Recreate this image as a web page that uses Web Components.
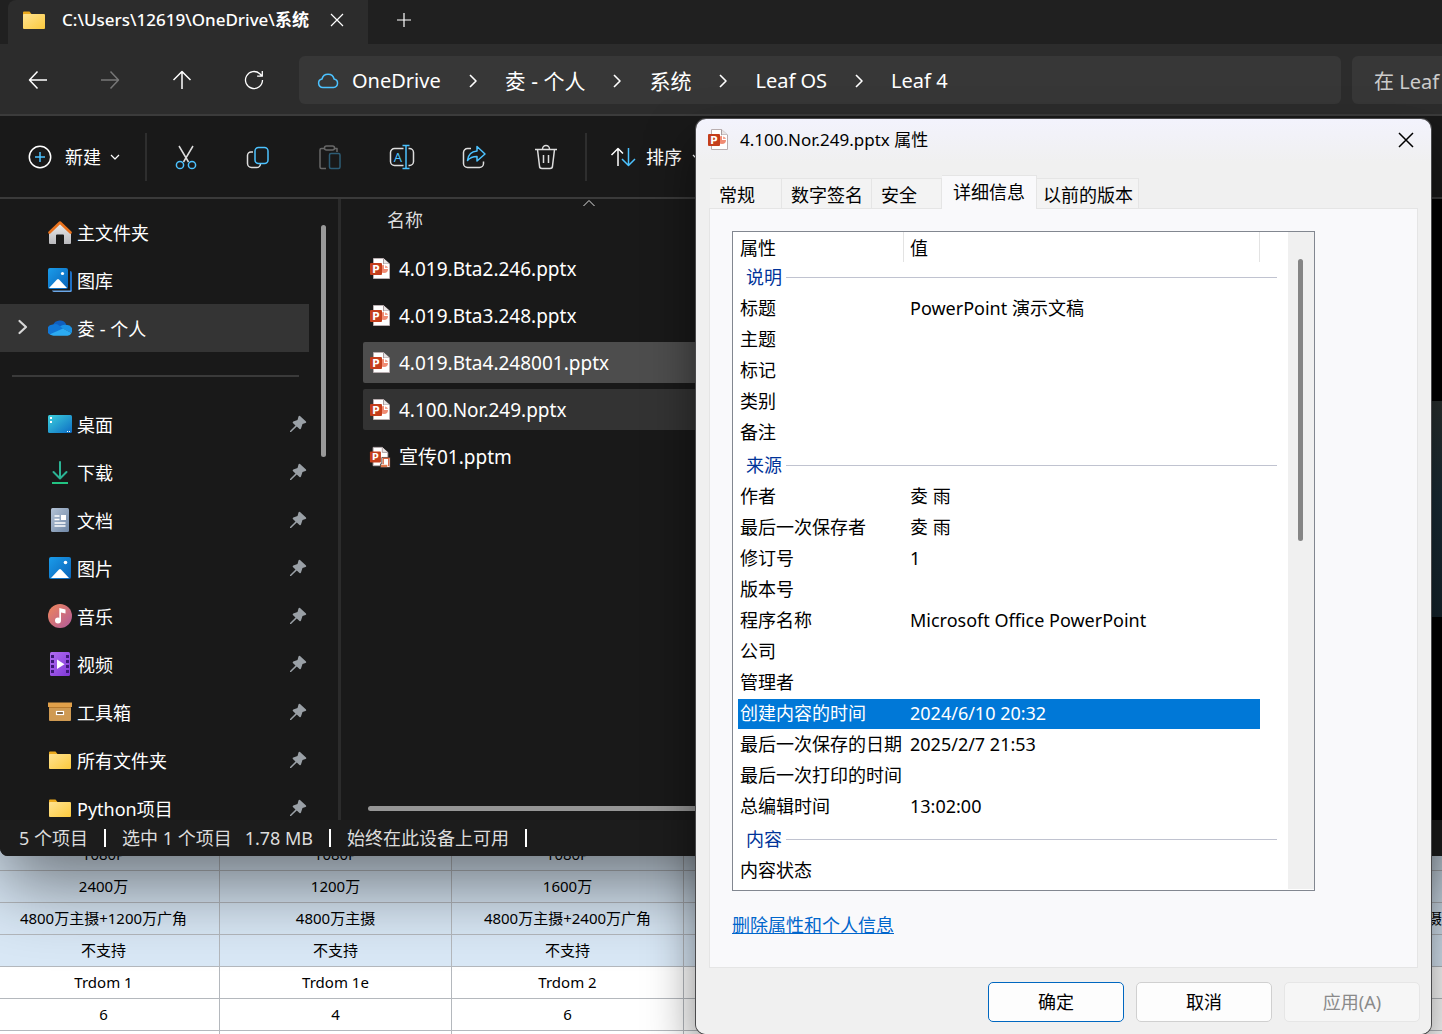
<!DOCTYPE html>
<html lang="zh-CN">
<head>
<meta charset="utf-8">
<title>4.100.Nor.249.pptx 属性</title>
<style>
    body {
        margin: 0;
        height: 100vh;
        overflow: hidden;
        position: relative;
        background: #fff;
        font-family: "Noto Sans", "Noto Sans CJK SC", sans-serif;
        font-size: 18px;
        line-height: 26px;
    }
    /* windows on the desktop */
    sheet-view {
        position: absolute;
        top: 839px;
        left: 0;
        right: 0;
    }
    explorer-window {
        position: absolute;
        top: 0;
        left: 0;
        right: 0;
        height: 856px;
    }
    properties-dialog {
        position: absolute;
        top: 119px;
        right: 11px;
        width: 735px;
    }
</style>
</head>
<body>
<sheet-view></sheet-view>

<explorer-window>
    <span slot="tab">C:\Users\12619\OneDrive\<b>系统</b></span>

    <side-item slot="side" icon="home">主文件夹</side-item>
    <side-item slot="side" icon="gallery">图库</side-item>
    <side-item slot="side" icon="onedrive" selected>夌 - 个人</side-item>
    <side-line slot="side"></side-line>
    <side-item slot="side" icon="desktop" pinned>桌面</side-item>
    <side-item slot="side" icon="download" pinned>下载</side-item>
    <side-item slot="side" icon="document" pinned>文档</side-item>
    <side-item slot="side" icon="picture" pinned>图片</side-item>
    <side-item slot="side" icon="music" pinned>音乐</side-item>
    <side-item slot="side" icon="video" pinned>视频</side-item>
    <side-item slot="side" icon="box" pinned>工具箱</side-item>
    <side-item slot="side" icon="folder" pinned>所有文件夹</side-item>
    <side-item slot="side" icon="folder" pinned>Python项目</side-item>

    <file-row slot="files" icon="pptx">4.019.Bta2.246.pptx</file-row>
    <file-row slot="files" icon="pptx">4.019.Bta3.248.pptx</file-row>
    <file-row slot="files" icon="pptx" state="active">4.019.Bta4.248001.pptx</file-row>
    <file-row slot="files" icon="pptx" state="hover">4.100.Nor.249.pptx</file-row>
    <file-row slot="files" icon="pptm">宣传01.pptm</file-row>
</explorer-window>

<properties-dialog>
    <span slot="title">4.100.Nor.249.pptx 属性</span>
</properties-dialog>

<script>
const ICONS = {
    folder: [24, 24, `
        <defs><linearGradient id="f" x1="0" y1="0" x2="1" y2="1"><stop offset="0" stop-color="#ffe391"/><stop offset="1" stop-color="#fbc93d"/></linearGradient></defs>
        <path fill="#eba91c" d="M1 4.500a1 1 0 0 1 1-1h5.500l2 2.500H22v5H1z"/>
        <rect x="1" y="6" width="22" height="15" rx="1" fill="url(#f)"/>`],
    home: [24, 24, `
        <defs><linearGradient id="h" x1="0" y1="0" x2="0" y2="1"><stop offset="0" stop-color="#eee"/><stop offset="1" stop-color="#b9b9bd"/></linearGradient></defs>
        <path fill="url(#h)" d="M1 12 12 2l11 10v11a1 1 0 0 1-1 1h-6v-8.500a1 1 0 0 0-1-1H9a1 1 0 0 0-1 1V24H2a1 1 0 0 1-1-1z"/>
        <path fill="none" stroke="#e8711c" stroke-width="2.600" stroke-linecap="round" stroke-linejoin="round" d="M1.500 12.500 12 2.500l10.500 10"/>`],
    gallery: [24, 24, `
        <defs><linearGradient id="g" x1="0" y1="0" x2="1" y2="1"><stop offset="0" stop-color="#1a9cea"/><stop offset="1" stop-color="#0a63b8"/></linearGradient></defs>
        <path fill="#1f6fc4" d="M22 3a2 2 0 0 1 2 2v17a2 2 0 0 1-2 2V3z"/>
        <path fill="#6ba7e8" d="M4 22.500h20a2 2 0 0 1-2 1.500H6a2 2 0 0 1-2-1.500z"/>
        <rect width="20" height="21" rx="2" fill="url(#g)"/>
        <path fill="#fff" d="M1 20l8-8.500a1.500 1.500 0 0 1 2 0L19 20z"/>
        <circle cx="14.500" cy="5.500" r="1.600" fill="#fff"/>`],
    picture: [24, 24, `
        <defs><linearGradient id="p" x1="0" y1="0" x2="1" y2="1"><stop offset="0" stop-color="#1a9cea"/><stop offset="1" stop-color="#0a63b8"/></linearGradient></defs>
        <rect x="1" y="1" width="22" height="22" rx="2" fill="url(#p)"/>
        <path fill="#fff" d="M3 22l8-8.500a1.500 1.500 0 0 1 2 0L21 22z"/>
        <circle cx="17.500" cy="6.500" r="1.800" fill="#fff"/>`],
    onedrive: [24, 24, `
        <path fill="#0f5fc0" d="M5 9.500A7.200 7.200 0 0 1 18.500 9L10 15z"/>
        <path fill="#1177d6" d="M5 8.500a6 6 0 0 1 6 1l5 3.500-13.500 6A5.500 5.500 0 0 1 5 8.500z"/>
        <path fill="#1a92e6" d="M18 9a5.300 5.300 0 0 1 5.500 8l-8-4-3.500-2.500A7 7 0 0 1 18 9z"/>
        <path fill="#2cabf2" d="M2 18.200 15 12.500l8.500 4.500a5 5 0 0 1-4 2.700h-14a6 6 0 0 1-3.500-1.500z"/>`],
    desktop: [24, 24, `
        <defs><linearGradient id="d" x1="0" y1="0" x2="1" y2="1"><stop offset="0" stop-color="#3dd0dc"/><stop offset="1" stop-color="#0d6cc4"/></linearGradient></defs>
        <rect y="3" width="24" height="18" rx="1.500" fill="url(#d)"/>
        <path fill="#fff" d="M2 5h2v2H2zM2 9h2v2H2zM19 19h1v1h-1zM21 19h1v1h-1z"/>`],
    download: [24, 24, `
        <path fill="none" stroke="#2bb394" stroke-width="2" stroke-linecap="round" stroke-linejoin="round" d="M12 2v16M5.500 12l6.500 6.500L18.500 12"/>
        <path fill="none" stroke="#22c382" stroke-width="2" d="M4 23h16"/>`],
    document: [24, 24, `
        <defs><linearGradient id="c" x1="0" y1="0" x2="1" y2="1"><stop offset="0" stop-color="#b4c3d6"/><stop offset="1" stop-color="#6f87a6"/></linearGradient></defs>
        <rect x="3" y="0" width="18" height="24" rx="1.500" fill="url(#c)"/>
        <path stroke="#fff" stroke-width="1.500" d="M6.500 8h5M6.500 11.500h5M6.500 15h11M6.500 18h11"/>
        <path fill="#fff" d="M13 7h5v5h-5z"/>`],
    music: [24, 24, `
        <defs><linearGradient id="m" x1="0" y1="0" x2="1" y2="1"><stop offset="0" stop-color="#f0875a"/><stop offset="1" stop-color="#b05a9c"/></linearGradient></defs>
        <circle cx="12" cy="12" r="12" fill="url(#m)"/>
        <circle cx="10" cy="16.500" r="3" fill="#fff"/>
        <path fill="#fff" d="M11.300 4 17.500 5.500V9.500l-4.500-1v8h-1.700z"/>`],
    video: [24, 24, `
        <defs><linearGradient id="v" x1="0" y1="0" x2="1" y2="1"><stop offset="0" stop-color="#b16cf2"/><stop offset="1" stop-color="#8038d6"/></linearGradient></defs>
        <rect x="2" y="0" width="20" height="24" rx="1.500" fill="url(#v)"/>
        <path stroke="#3d1778" stroke-width="3" stroke-dasharray="3 2" d="M4.500 3v19M19.500 3v19"/>
        <path fill="#fff" d="M9 7.500v9.500l7.500-4.700z"/>`],
    box: [24, 24, `
        <rect x="1" y="7" width="22" height="14" rx="1" fill="#cf9a52"/>
        <path fill="#e0a04a" d="M0 2.500h24V7H0z"/>
        <path fill="#b67a2e" d="M1 7h22v1H1z"/>
        <rect x="8.500" y="11.500" width="7" height="3" fill="#7a5a30" stroke="#fff" stroke-width="1.200"/>`],
    pin: [18, 18, `
        <path fill="#9aa0a6" d="M11 1l6 5.500a1 1 0 0 1-.5 1.500l-3 1-1.500 4.500a1 1 0 0 1-1.500.4L7.800 11.500 2 17H1v-1l5.500-5.500-2.600-2.600A1 1 0 0 1 4.300 6.400L8.500 5l1-3.500A1 1 0 0 1 11 1z"/>`],
    pptx: [22, 24, `
        <path fill="#fff" stroke="#b9aeb0" d="M4.500 1.500h10l6 5.500v14.500h-16z"/>
        <path fill="#e9e4e4" stroke="#a89c9e" d="M14.500 1.500V7h6"/>
        <circle cx="15" cy="12" r="4" fill="#f08c74"/><path fill="#fff" d="M15 7h5v5h-5z"/><path fill="#f3a592" d="M16 8.500a3 3 0 0 1 3 2.500h-3z"/>
        <rect x="1" y="6" width="12" height="12" rx="1" fill="#c43e1c"/>
        <text x="7" y="15.500" font-family="DejaVu Sans" font-size="10" font-weight="700" fill="#fff" text-anchor="middle">P</text>`],
    pptm: [24, 24, `
        <path fill="#fff" stroke="#b9aeb0" d="M4.500 1.500h10l6 5.500v14.500h-16z"/>
        <path fill="#e9e4e4" stroke="#a89c9e" d="M14.500 1.500V7h6"/>
        <rect x="1" y="6" width="12" height="12" rx="1" fill="#c43e1c"/>
        <text x="7" y="15.500" font-family="DejaVu Sans" font-size="10" font-weight="700" fill="#fff" text-anchor="middle">P</text>
        <path fill="#fff" stroke="#2a1a16" stroke-width=".8" d="M14 12.500h9V23.500H12.500v-4H14z"/>
        <path fill="none" stroke="#d9653f" stroke-width="1.400" d="M15.500 20v-6.500H22.500M21.500 14v8"/>
        <path fill="#e07a4e" d="M13 20.500h7V23h-7z"/>`],
    cloud: [24, 24, `<path class="a" d="M7 18.500h10.500a4.300 4.300 0 0 0 .6-8.500 6.200 6.200 0 0 0-12.100 0A4.300 4.300 0 0 0 7 18.500z"/>`],
    back: [24, 24, `<path d="M21 12H3.500M11.500 3.500 3.500 12l8 8.500"/>`],
    forward: [24, 24, `<path d="M3 12h17.500M12.500 3.500l8 8.500-8 8.500"/>`],
    up: [24, 24, `<path d="M12 21V3.500M3.500 12 12 3.500l8.500 8.500"/>`],
    refresh: [24, 24, `<path stroke-width="1.300" d="M20.500 12A8.500 8.500 0 1 1 17.800 5.800L20 8M20.300 3v5.200h-5.200"/>`],
    chevron: [10, 18, `<path stroke-width="1.600" d="M2 4l6 6-6 6"/>`],
    expand: [12, 16, `<path stroke-width="2.200" stroke-linecap="round" d="M2.500 2 9 8l-6.500 6"/>`],
    down: [10, 10, `<path stroke-width="1.200" d="M1 3l4 4 4-4"/>`],
    caret: [14, 8, `<path stroke-width="1" d="M1.500 7 7 1.500 12.500 7"/>`],
    close: [18, 18, `<path stroke-width="1.500" d="M2 2l14 14M16 2 2 16"/>`],
    closetab: [14, 14, `<path stroke-width="1.200" d="M1 1l12 12M13 1 1 13"/>`],
    plus: [16, 16, `<path stroke-width="1.200" d="M8 1v14M1 8h14"/>`],
    create: [24, 24, `<circle cx="12" cy="12" r="10.700"/><path class="a" d="M12 7v10M7 12h10"/>`],
    cut: [26, 26, `
        <path d="M6 2l9.500 16M20 2l-9.500 16"/>
        <circle class="a" cx="7" cy="21" r="3.600"/><circle class="a" cx="19" cy="21" r="3.600"/>`],
    copy: [26, 26, `
        <path d="M8 8H6a3.500 3.500 0 0 0-3.500 3.500v8A4 4 0 0 0 6.500 23.500h5a4 4 0 0 0 4-3.500"/>
        <rect class="a" x="10" y="3.500" width="13" height="16" rx="3.500"/>`],
    paste: [26, 26, `
        <path d="M8 4.500H4.500A1.500 1.500 0 0 0 3 6v17A1.500 1.500 0 0 0 4.500 24.500H9M18 4.500h2V8"/>
        <rect x="7.500" y="2" width="10" height="4" rx="2"/>
        <rect class="a" x="12.500" y="9.500" width="10.500" height="15" rx="1.500"/>`],
    rename: [26, 26, `
        <path d="M14.500 4.500h-9a4 4 0 0 0-4 4v9a4 4 0 0 0 4 4h9M19.500 4.500h1a4 4 0 0 1 4 4v9a4 4 0 0 1-4 4h-1"/>
        <path class="a" d="M17 2v22M13.500 1.500h7M13.500 24.500h7"/>
        <text class="t" x="9" y="17.500" font-size="13" text-anchor="middle">A</text>`],
    share: [26, 26, `
        <path d="M10 4.500H6.500a4 4 0 0 0-4 4v11a4 4 0 0 0 4 4h12a4 4 0 0 0 4-4v-2"/>
        <path class="a" d="M16 2.500 24 10l-8 7v-4.500c-4 0-7 1-9.500 4 .5-5 3.500-9 9.500-9.500z"/>`],
    trash: [26, 26, `
        <path d="M2 5.500h22M4.500 5.500l2 16.500a2.500 2.500 0 0 0 2.500 2.500h8a2.500 2.500 0 0 0 2.500-2.500l2-16.500M9.500 5a3.500 3.500 0 0 1 7 0M10.500 11v8M15.500 11v8"/>`],
    sort: [26, 26, `
        <path d="M8 22V4.500M1.500 11 8 4.500l5 5"/>
        <path class="a" d="M18.500 4v17.500M12 15l6.500 6.500L25 15"/>`],
};

class WinIcon extends HTMLElement {
    constructor(){
        super();
        this.attachShadow({ mode: 'open' });
    }

    connectedCallback(){
        const [w, h, shape] = ICONS[this.getAttribute('name')];
        this.shadowRoot.innerHTML = `
            <style>
                :host {
                    display: inline-flex;
                    flex: none;
                }
                svg {
                    display: block;
                }
                .a {
                    stroke: #4cc2ff;
                }
                .t {
                    fill: #4cc2ff;
                    stroke: none;
                }
            </style>
            <svg width="${w}" height="${h}" viewBox="0 0 ${w} ${h}" aria-hidden="true"></svg>
        `;
        const svg = this.shadowRoot.querySelector('svg');
        // line icons inherit the text colour, filled ones bring their own
        if(!shape.includes('fill="')){
            svg.setAttribute('fill', 'none');
            svg.setAttribute('stroke', 'currentColor');
            svg.setAttribute('stroke-width', '1.500');
            svg.setAttribute('stroke-linejoin', 'round');
        }
        svg.innerHTML = shape;
    }
}
customElements.define('win-icon', WinIcon);

class SideItem extends HTMLElement {
    constructor(){
        super();
        this.attachShadow({ mode: 'open' });
    }

    connectedCallback(){
        const selected = this.hasAttribute('selected');
        const pinned = this.hasAttribute('pinned');
        this.shadowRoot.innerHTML = `
            <style>
                :host {
                    display: block;
                }
                :host([selected]) {
                    background: #343434;
                }
                a {
                    display: grid;
                    grid-template-columns: 34px 24px 1fr 20px;
                    align-items: center;
                    height: 48px;
                    padding-left: 14px;
                    color: #fff;
                    text-decoration: none;
                }
                .label {
                    padding: 2px 0 0 5px;
                    white-space: nowrap;
                }
                .arrow {
                    padding-left: 3px;
                    color: #d8d8d8;
                }
            </style>
            <a href="#">
                <span class="arrow">${selected ? '<win-icon name="expand"></win-icon>' : ''}</span>
                <win-icon name="${this.getAttribute('icon')}"></win-icon>
                <span class="label"><slot></slot></span>
                ${pinned ? '<win-icon name="pin"></win-icon>' : ''}
            </a>
        `;
    }
}
customElements.define('side-item', SideItem);

class SideLine extends HTMLElement {
    constructor(){
        super();
        this.attachShadow({ mode: 'open' });
        this.shadowRoot.innerHTML = `
            <style>
                :host {
                    display: flex;
                    align-items: center;
                    height: 48px;
                    padding: 0 10px 0 12px;
                }
                hr {
                    flex: 1;
                    margin: 0;
                    border: 0;
                    height: 2px;
                    background: #3a3a3a;
                }
            </style>
            <hr>
        `;
    }
}
customElements.define('side-line', SideLine);

class FileRow extends HTMLElement {
    constructor(){
        super();
        this.attachShadow({ mode: 'open' });
    }

    connectedCallback(){
        this.shadowRoot.innerHTML = `
            <style>
                :host {
                    display: block;
                    font-size: 19px;
                }
                button {
                    display: grid;
                    grid-template-columns: 22px 1fr;
                    align-items: center;
                    gap: 8px;
                    width: 100%;
                    height: 41px;
                    padding: 0 6px;
                    border: 0;
                    border-radius: 2px;
                    background: none;
                    font: inherit;
                    color: #fff;
                    text-align: left;
                }
                :host([state="active"]) button {
                    background: #4d4d4d;
                }
                :host([state="hover"]) button {
                    background: #333;
                }
            </style>
            <button type="button">
                <win-icon name="${this.getAttribute('icon')}"></win-icon>
                <span><slot></slot></span>
            </button>
        `;
    }
}
customElements.define('file-row', FileRow);

class ExplorerWindow extends HTMLElement {
    constructor(){
        super();
        this.attachShadow({ mode: 'open' });
        const crumbs = [['夌 - 个人', 'cjk'], ['系统', 'cjk'], ['Leaf OS', ''], ['Leaf 4', '']];
        const tools = [['cut', '剪切'], ['copy', '复制'], ['paste', '粘贴'], ['rename', '重命名'], ['share', '共享'], ['trash', '删除']];
        this.shadowRoot.innerHTML = `
            <style>
                :host {
                    display: flex;
                    flex-direction: column;
                    overflow: hidden;
                    border-bottom-left-radius: 8px;
                    background: #191919;
                    color: #fff;
                    box-shadow: 0 28px 72px rgba(0, 0, 0, .5);
                }
                button {
                    display: flex;
                    align-items: center;
                    justify-content: center;
                    flex: none;
                    padding: 0;
                    border: 0;
                    background: none;
                    color: inherit;
                    font: inherit;
                }
                header {
                    display: flex;
                    height: 44px;
                    padding-left: 8px;
                    background: #202020;
                }
                .tab {
                    display: flex;
                    align-items: center;
                    box-sizing: border-box;
                    width: 360px;
                    padding: 0 22px 4px 14px;
                    gap: 16px;
                    background: #2c2c2c;
                    font-size: 17px;
                    font-weight: 500;
                    white-space: nowrap;
                    border-radius: 8px 0 0 0;
                }
                .tab button {
                    margin-left: auto;
                    width: 18px;
                }
                header > button {
                    width: 72px;
                    padding-bottom: 4px;
                }
                .nav {
                    display: flex;
                    align-items: center;
                    height: 68px;
                    padding: 2px 0 0 2px;
                    background: #2c2c2c;
                    border-bottom: 2px solid #3b3b3b;
                    font-size: 20px;
                }
                .nav > button {
                    width: 72px;
                    height: 48px;
                }
                .nav > button[disabled] {
                    color: #777;
                }
                .address {
                    display: flex;
                    align-items: center;
                    flex: 1;
                    gap: 27px;
                    height: 48px;
                    margin: 0 11px 0 9px;
                    padding-left: 17px;
                    border-radius: 6px;
                    background: #373737;
                    white-space: nowrap;
                }
                .address a {
                    display: flex;
                    align-items: center;
                    gap: 12px;
                    padding-top: 2px;
                    color: inherit;
                    text-decoration: none;
                }
                .address .cjk {
                    font-size: 21px;
                }
                input {
                    box-sizing: border-box;
                    width: 90px;
                    height: 48px;
                    padding: 2px 0 0 22px;
                    border: 0;
                    border-radius: 6px 0 0 6px;
                    background: #373737;
                    color: #ccc;
                    font: inherit;
                }
                input::placeholder {
                    color: #ccc;
                }
                .tools {
                    display: flex;
                    align-items: center;
                    height: 81px;
                    border-bottom: 2px solid #3a3a3a;
                }
                .tools button {
                    width: 72px;
                    height: 48px;
                    color: #ddd;
                }
                .tools button[disabled] win-icon {
                    opacity: .4;
                }
                .tools .wide {
                    width: auto;
                    gap: 10px;
                    padding: 0 20px;
                    color: #fff;
                }
                .tools .first {
                    gap: 13px;
                    padding: 0 22px 0 28px;
                }
                .tools .first win-icon:last-child {
                    margin-left: -4px;
                }
                .split {
                    width: 2px;
                    height: 48px;
                    margin: 0 3px;
                    background: #2e2e2e;
                }
                main {
                    display: flex;
                    flex: 1;
                    min-height: 0;
                }
                nav {
                    display: flex;
                    width: 338px;
                    flex: none;
                    overflow: hidden;
                    border-right: 3px solid #2b2b2b;
                }
                .side {
                    width: 309px;
                    padding-top: 9px;
                }
                .thumb {
                    width: 5px;
                    height: 232px;
                    margin: 26px 0 0 12px;
                    border-radius: 3px;
                    background: #999;
                }
                .files {
                    display: flex;
                    flex-direction: column;
                    flex: 1;
                    min-width: 0;
                    padding-left: 22px;
                }
                .column {
                    display: flex;
                    flex-direction: column;
                    width: 452px;
                    height: 49px;
                    color: #ddd;
                }
                .column win-icon {
                    align-self: center;
                }
                .column span {
                    padding-left: 24px;
                }
                .rows {
                    display: grid;
                    gap: 6px;
                }
                .bar {
                    height: 5px;
                    margin: auto 0 9px 5px;
                    border-radius: 3px;
                    background: #959595;
                }
                aside {
                    display: flex;
                    flex-direction: column;
                    width: 40px;
                    background: #000;
                }
                aside div {
                    height: 216px;
                    margin-top: 202px;
                    background: linear-gradient(#2a302f, #1a2c36 45%, #15242c);
                }
                footer {
                    display: flex;
                    align-items: center;
                    gap: 16px;
                    height: 36px;
                    padding-left: 19px;
                    background: #1c1c1c;
                    color: #ddd;
                }
                footer div {
                    display: flex;
                    gap: 13px;
                }
                footer i {
                    width: 2px;
                    height: 18px;
                    background: #fff;
                }
            </style>
            <header>
                <div class="tab">
                    <win-icon name="folder"></win-icon>
                    <slot name="tab"></slot>
                    <button type="button" aria-label="关闭标签页"><win-icon name="closetab"></win-icon></button>
                </div>
                <button type="button" aria-label="新标签页"><win-icon name="plus"></win-icon></button>
            </header>
            <div class="nav">
                <button type="button" aria-label="后退"><win-icon name="back"></win-icon></button>
                <button type="button" aria-label="前进" disabled><win-icon name="forward"></win-icon></button>
                <button type="button" aria-label="上移"><win-icon name="up"></win-icon></button>
                <button type="button" aria-label="刷新"><win-icon name="refresh"></win-icon></button>
                <div class="address">
                    <a href="#"><win-icon name="cloud"></win-icon>OneDrive</a>
                    ${crumbs.map(([name, cls]) => `<win-icon name="chevron"></win-icon><a href="#" class="${cls}">${name}</a>`).join('')}
                </div>
                <input type="text" aria-label="搜索" placeholder="在 Leaf">
            </div>
            <div class="tools">
                <button type="button" class="wide first"><win-icon name="create"></win-icon>新建<win-icon name="down"></win-icon></button>
                <div class="split"></div>
                ${tools.map(([icon, label]) => `<button type="button" aria-label="${label}" ${icon === 'paste' ? 'disabled' : ''}><win-icon name="${icon}"></win-icon></button>`).join('')}
                <div class="split"></div>
                <button type="button" class="wide"><win-icon name="sort"></win-icon>排序<win-icon name="down"></win-icon></button>
            </div>
            <main>
                <nav>
                    <div class="side"><slot name="side"></slot></div>
                    <div class="thumb"></div>
                </nav>
                <div class="files">
                    <div class="column"><win-icon name="caret"></win-icon><span>名称</span></div>
                    <div class="rows"><slot name="files"></slot></div>
                    <div class="bar"></div>
                </div>
                <aside><div></div></aside>
            </main>
            <footer>
                <span>5 个项目</span><i></i>
                <div><span>选中 1 个项目</span><span>1.78 MB</span></div><i></i>
                <span>始终在此设备上可用</span><i></i>
            </footer>
        `;
    }
}
customElements.define('explorer-window', ExplorerWindow);

class PropertyTable extends HTMLElement {
    constructor(){
        super();
        this.attachShadow({ mode: 'open' });
        const groups = [
            ['说明', [['标题', 'PowerPoint 演示文稿'], ['主题', ''], ['标记', ''], ['类别', ''], ['备注', '']]],
            ['来源', [['作者', '夌 雨'], ['最后一次保存者', '夌 雨'], ['修订号', '1'], ['版本号', ''],
                ['程序名称', 'Microsoft Office PowerPoint'], ['公司', ''], ['管理者', ''],
                ['创建内容的时间', '2024/6/10 20:32'], ['最后一次保存的日期', '2025/2/7 21:53'],
                ['最后一次打印的时间', ''], ['总编辑时间', '13:02:00']]],
            ['内容', [['内容状态', '']]],
        ];
        const row = ([name, value]) => `
            <tr class="${name === '创建内容的时间' ? 'selected' : ''}"><th scope="row">${name}</th><td>${value}</td><td></td></tr>`;
        const group = ([name, rows]) => `
            <tbody><tr class="group"><th colspan="3"><div>${name}<i></i></div></th></tr>${rows.map(row).join('')}</tbody>`;
        this.shadowRoot.innerHTML = `
            <style>
                :host {
                    display: flex;
                    padding: 0 0 3px 5px;
                    gap: 11px;
                    border: 1px solid #828790;
                    background: #fff;
                }
                table {
                    flex: 1;
                    table-layout: fixed;
                    border-collapse: separate;
                    border-spacing: 0;
                }
                col.name {
                    width: 166px;
                }
                col.end {
                    width: 17px;
                }
                th, td {
                    height: 28px;
                    padding: 0 0 2px 2px;
                    border-bottom: 1px solid transparent;
                    background-clip: padding-box;
                    text-align: left;
                    font-weight: 400;
                    white-space: nowrap;
                }
                td, thead th + th {
                    padding-left: 6px;
                }
                thead th {
                    padding-top: 2px;
                    padding-bottom: 0;
                    box-shadow: inset -1px 0 #e3e3e3;
                }
                .group th {
                    padding-left: 8px;
                    color: #039;
                }
                tbody + tbody .group th {
                    padding-top: 2px;
                }
                .group div {
                    display: flex;
                    align-items: center;
                    gap: 4px;
                }
                i {
                    flex: 1;
                    height: 1px;
                    background: #c0c3d0;
                }
                .selected th, .selected td:nth-child(2) {
                    background-color: #0078d7;
                    color: #fff;
                }
                .track {
                    width: 26px;
                    margin-bottom: -2px;
                    background: #f0f0f0;
                }
                .thumb {
                    width: 5px;
                    height: 282px;
                    margin: 27px 0 0 10px;
                    border-radius: 3px;
                    background: #858585;
                }
            </style>
            <table>
                <colgroup><col class="name"><col><col class="end"></colgroup>
                <thead><tr><th scope="col">属性</th><th scope="col">值</th><td></td></tr></thead>
                ${groups.map(group).join('')}
            </table>
            <div class="track"><div class="thumb"></div></div>
        `;
    }
}
customElements.define('property-table', PropertyTable);

class PropertiesDialog extends HTMLElement {
    constructor(){
        super();
        this.attachShadow({ mode: 'open' });
        this.shadowRoot.innerHTML = `
            <style>
                :host {
                    display: block;
                    border-radius: 10px;
                    background: linear-gradient(#f3f3fd, #f0f0f0 44px);
                    color: #000;
                    box-shadow: 0 0 0 1px #4a4a4c, 0 24px 48px rgba(0, 0, 0, .5);
                }
                button {
                    padding: 0;
                    border: 0;
                    background: none;
                    color: inherit;
                    font: inherit;
                }
                header {
                    display: flex;
                    align-items: center;
                    gap: 11px;
                    height: 41px;
                    padding-left: 11px;
                    font-size: 17px;
                }
                header button {
                    display: flex;
                    justify-content: center;
                    width: 50px;
                    margin-left: auto;
                }
                .tabs {
                    display: flex;
                    align-items: flex-end;
                    padding: 15px 0 0 14px;
                }
                .tabs button {
                    height: 30px;
                    padding: 2px 8px 0 9px;
                    border: 1px solid #e5e5e5;
                    border-width: 1px 1px 0 0;
                    background: #f3f3f3;
                    white-space: nowrap;
                }
                .tabs .first {
                    padding-right: 26px;
                }
                .tabs .safe {
                    padding-right: 24px;
                }
                .tabs .last {
                    padding: 2px 5px 0 6px;
                }
                /* the open tab covers the top line of the panel */
                .tabs [aria-selected="true"] {
                    z-index: 1;
                    height: 34px;
                    margin-bottom: -1px;
                    padding: 0 11px 2px;
                    background: #f9f9fb;
                }
                .panel {
                    display: grid;
                    gap: 21px;
                    margin: 0 13px;
                    padding: 22px 102px 29px 22px;
                    border: 1px solid #e5e5e5;
                    background: #f9f9fb;
                }
                a {
                    justify-self: start;
                    color: #0066cc;
                }
                footer {
                    display: flex;
                    justify-content: flex-end;
                    gap: 12px;
                    padding: 14px 11px 12px;
                }
                footer button {
                    width: 136px;
                    height: 40px;
                    border: 1px solid #d0d0d0;
                    border-radius: 5px;
                    background: #fdfdfd;
                }
                footer .ok {
                    border-color: #0067c0;
                }
                footer button[disabled] {
                    border-color: #e6e6e6;
                    background: #f6f6f6;
                    color: #8a8a8a;
                }
            </style>
            <header>
                <win-icon name="pptx"></win-icon>
                <slot name="title"></slot>
                <button type="button" aria-label="关闭"><win-icon name="close"></win-icon></button>
            </header>
            <div class="tabs" role="tablist">
                <button type="button" role="tab" class="first">常规</button>
                <button type="button" role="tab">数字签名</button>
                <button type="button" role="tab" class="safe">安全</button>
                <button type="button" role="tab" aria-selected="true">详细信息</button>
                <button type="button" role="tab" class="last">以前的版本</button>
            </div>
            <div class="panel">
                <property-table></property-table>
                <a href="#">删除属性和个人信息</a>
            </div>
            <footer>
                <button type="button" class="ok">确定</button>
                <button type="button">取消</button>
                <button type="button" disabled>应用(A)</button>
            </footer>
        `;
    }
}
customElements.define('properties-dialog', PropertiesDialog);

class SheetView extends HTMLElement {
    constructor(){
        super();
        this.attachShadow({ mode: 'open' });
        const rows = [
            ['1080P', '1080P', '1080P', ''],
            ['2400万', '1200万', '1600万', ''],
            ['4800万主摄+1200万广角', '4800万主摄', '4800万主摄+2400万广角', '4800万主摄'],
            ['不支持', '不支持', '不支持', ''],
            ['Trdom 1', 'Trdom 1e', 'Trdom 2', ''],
            ['6', '4', '6', ''],
            ['', '', '', ''],
        ];
        this.shadowRoot.innerHTML = `
            <style>
                :host {
                    display: block;
                    font-size: 15px;
                }
                table {
                    width: 100%;
                    table-layout: fixed;
                    border-collapse: separate;
                    border-spacing: 0;
                    color: #000;
                }
                col {
                    width: 232px;
                }
                col.first {
                    width: 220px;
                }
                col.rest {
                    width: auto;
                }
                td {
                    height: 29px;
                    padding: 0 0 2px;
                    border: 1px solid #b4b8bd;
                    border-width: 0 1px 1px 0;
                    text-align: center;
                    white-space: nowrap;
                }
                td:first-child {
                    padding-right: 12px;
                }
                td:last-child {
                    border-right: 0;
                    text-align: right;
                }
                tr:nth-child(-n+4) {
                    background: #d9e8f6;
                }
            </style>
            <table>
                <colgroup><col class="first"><col><col><col class="rest"></colgroup>
                ${rows.map(r => `<tr>${r.map(c => `<td>${c}</td>`).join('')}</tr>`).join('')}
            </table>
        `;
    }
}
customElements.define('sheet-view', SheetView);
</script>
</body>
</html>
